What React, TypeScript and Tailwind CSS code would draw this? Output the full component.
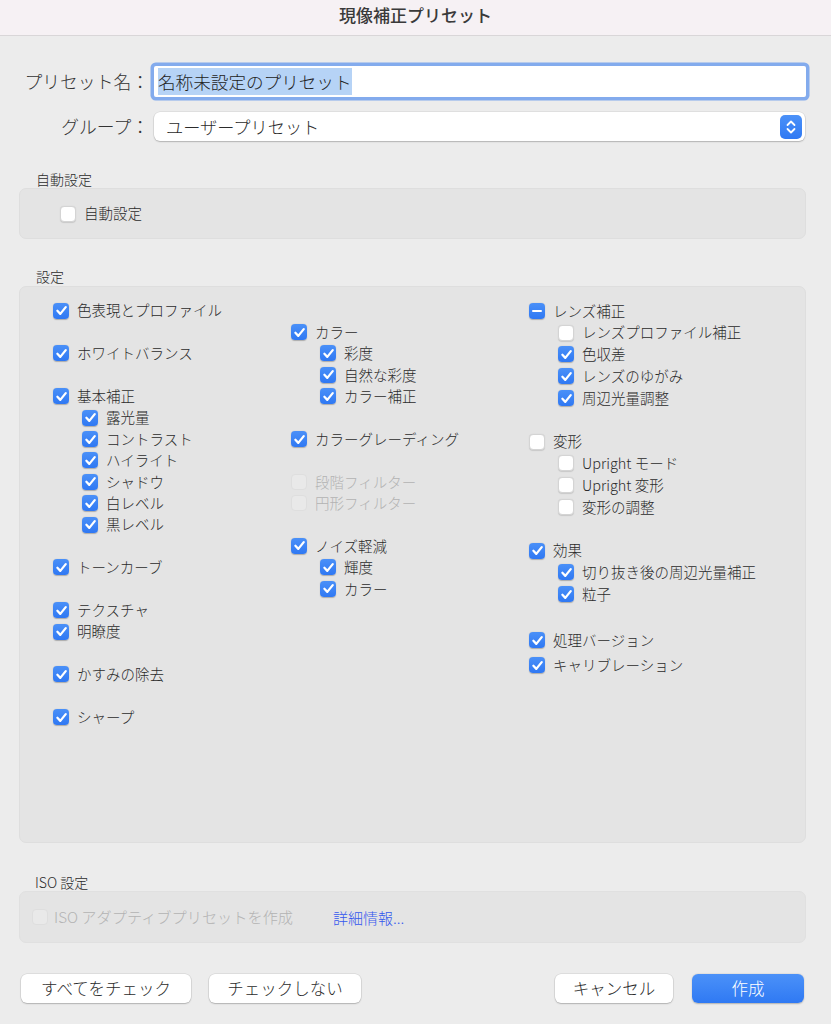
import React from "react";

type State = "on" | "off" | "mixed" | "disabled";

const FONT = { fontFamily: '"Noto Sans CJK JP", "Noto Sans", sans-serif' };

function Box({ state }: { state: State }) {
  if (state === "on") {
    return (
      <span className="flex h-[16px] w-[16px] shrink-0 items-center justify-center rounded-[4px] bg-gradient-to-b from-[#4a90f8] to-[#2f78f3] shadow-[0_0.5px_1px_rgba(0,0,0,0.25)]">
        <svg width="13" height="13" viewBox="0 0 12 12" fill="none">
          <path d="M2.2 6.3 L4.9 9.1 L9.9 2.9" stroke="white" strokeWidth="2.1" strokeLinecap="round" strokeLinejoin="round" />
        </svg>
      </span>
    );
  }
  if (state === "mixed") {
    return (
      <span className="flex h-[16px] w-[16px] shrink-0 items-center justify-center rounded-[4px] bg-gradient-to-b from-[#4a90f8] to-[#2f78f3] shadow-[0_0.5px_1px_rgba(0,0,0,0.25)]">
        <span className="h-[2.5px] w-[10px] rounded-full bg-white" />
      </span>
    );
  }
  if (state === "disabled") {
    return <span className="h-[16px] w-[16px] shrink-0 rounded-[4px] border border-[#dedede] bg-[#e9e9e9]" />;
  }
  return <span className="h-[16px] w-[16px] shrink-0 rounded-[4px] border border-[#d4d4d4] bg-white shadow-[0_0.5px_1px_rgba(0,0,0,0.12)]" />;
}

type Item = { t?: string; s?: State; sub?: boolean; h?: string };

function Row({ item, h }: { item: Item; h: string }) {
  const cls = item.h ?? h;
  if (!item.t) return <div className={cls} />;
  const st = item.s ?? "on";
  return (
    <div className={`flex items-center gap-[8px] ${cls} ${item.sub ? "pl-[29px]" : ""}`}>
      <Box state={st} />
      <span className={`whitespace-nowrap text-[14.5px] font-light leading-none ${st === "disabled" ? "text-[#b3b3b3]" : "text-[#2b2b2b]"}`}>
        {item.t}
      </span>
    </div>
  );
}

const B: Item = {};

const col1: Item[] = [
  { t: "色表現とプロファイル" },
  B,
  { t: "ホワイトバランス" },
  B,
  { t: "基本補正" },
  { t: "露光量", sub: true },
  { t: "コントラスト", sub: true },
  { t: "ハイライト", sub: true },
  { t: "シャドウ", sub: true },
  { t: "白レベル", sub: true },
  { t: "黒レベル", sub: true },
  B,
  { t: "トーンカーブ" },
  B,
  { t: "テクスチャ" },
  { t: "明瞭度" },
  B,
  { t: "かすみの除去" },
  B,
  { t: "シャープ" },
];

const col2: Item[] = [
  B,
  { t: "カラー" },
  { t: "彩度", sub: true },
  { t: "自然な彩度", sub: true },
  { t: "カラー補正", sub: true },
  B,
  { t: "カラーグレーディング" },
  B,
  { t: "段階フィルター", s: "disabled" },
  { t: "円形フィルター", s: "disabled" },
  B,
  { t: "ノイズ軽減" },
  { t: "輝度", sub: true },
  { t: "カラー", sub: true },
];

const col3: Item[] = [
  { t: "レンズ補正", s: "mixed" },
  { t: "レンズプロファイル補正", s: "off", sub: true },
  { t: "色収差", sub: true },
  { t: "レンズのゆがみ", sub: true },
  { t: "周辺光量調整", sub: true },
  B,
  { t: "変形", s: "off" },
  { t: "Upright モード", s: "off", sub: true },
  { t: "Upright 変形", s: "off", sub: true },
  { t: "変形の調整", s: "off", sub: true },
  B,
  { t: "効果" },
  { t: "切り抜き後の周辺光量補正", sub: true },
  { t: "粒子", sub: true },
  { h: "h-[24px]" },
  { t: "処理バージョン" },
  { h: "h-[3.5px]" },
  { t: "キャリブレーション" },
];

function Button({ children, w, primary }: { children: React.ReactNode; w: string; primary?: boolean }) {
  return (
    <div
      className={`flex h-[29px] items-center justify-center rounded-[6px] text-[16.5px] font-light leading-none ${w} ${
        primary
          ? "bg-gradient-to-b from-[#4b91f8] to-[#2f79f3] text-white shadow-[0_0.5px_1.5px_rgba(0,0,0,0.25)]"
          : "bg-white text-[#2b2b2b] shadow-[0_0_0_0.5px_rgba(0,0,0,0.12),0_1px_1.5px_rgba(0,0,0,0.2)]"
      }`}
    >
      {children}
    </div>
  );
}

export default function App() {
  return (
    <div style={FONT} className="flex h-[1024px] w-[831px] flex-col overflow-hidden bg-[#ececec]">
      <div className="flex h-[36px] shrink-0 items-start justify-center border-b border-[#d9d6d8] bg-[#f6f1f4] pt-[5px]">
        <span className="text-[17px] font-medium leading-[20px] text-[#3a3a3a]">現像補正プリセット</span>
      </div>

      <div className="flex flex-col pl-[19px] pr-[25px]">
        <div className="mt-[30px] flex items-center">
          <div className="w-[130px] text-right text-[17.8px] font-light leading-none text-[#333]">プリセット名：</div>
          <div className="ml-[5px] flex h-[31px] flex-1 items-center rounded-[2px] bg-white pl-[4px] shadow-[0_0_0_3.5px_rgba(96,150,238,0.75)]">
            <span className="bg-[#b6d3f6] text-[17.6px] font-light leading-[27px] text-[#222]">名称未設定のプリセット</span>
          </div>
        </div>

        <div className="mt-[15px] flex items-center">
          <div className="w-[130px] text-right text-[17.8px] font-light leading-none text-[#333]">グループ：</div>
          <div className="ml-[5px] mr-[1px] flex h-[29px] flex-1 items-center justify-between rounded-[6px] bg-white pl-[12px] pr-[3px] shadow-[0_0_0_0.5px_rgba(0,0,0,0.1),0_1px_1.5px_rgba(0,0,0,0.2)]">
            <span className="text-[17.2px] font-light leading-none text-[#2b2b2b]">ユーザープリセット</span>
            <span className="flex h-[24px] w-[22px] items-center justify-center rounded-[5px] bg-gradient-to-b from-[#4b91f8] to-[#2f79f3]">
              <svg width="12" height="18" viewBox="0 0 12 18" fill="none">
                <path d="M2.5 7 L6 3.5 L9.5 7" stroke="white" strokeWidth="1.8" strokeLinecap="round" strokeLinejoin="round" />
                <path d="M2.5 11 L6 14.5 L9.5 11" stroke="white" strokeWidth="1.8" strokeLinecap="round" strokeLinejoin="round" />
              </svg>
            </span>
          </div>
        </div>

        <div className="mt-[29px] pl-[17px] text-[14px] font-light leading-[18px] text-[#2b2b2b]">自動設定</div>
        <div className="flex h-[51px] items-center rounded-[7px] border border-[#dedede] bg-[#e4e4e4] pl-[40px]">
          <div className="flex items-center gap-[8px]">
            <Box state="off" />
            <span className="text-[14.5px] font-light leading-none text-[#2b2b2b]">自動設定</span>
          </div>
        </div>

        <div className="mt-[28px] pl-[17px] text-[14px] font-light leading-[18px] text-[#2b2b2b]">設定</div>
        <div className="mt-[1px] flex h-[557px] rounded-[7px] border border-[#dedede] bg-[#e4e4e4] pl-[33px] pt-[13px]">
          <div className="flex w-[238px] flex-col">
            {col1.map((it, i) => (
              <Row key={i} item={it} h="h-[21.4px]" />
            ))}
          </div>
          <div className="flex w-[238px] flex-col">
            {col2.map((it, i) => (
              <Row key={i} item={it} h="h-[21.4px]" />
            ))}
          </div>
          <div className="flex w-[250px] flex-col">
            {col3.map((it, i) => (
              <Row key={i} item={it} h="h-[21.8px]" />
            ))}
          </div>
        </div>

        <div className="mt-[30px] pl-[16px] text-[14px] font-light leading-[18px] text-[#2b2b2b]">ISO 設定</div>
        <div className="flex h-[52px] items-center rounded-[7px] border border-[#e0e0e0] bg-[#e4e4e4] pl-[12px]">
          <div className="flex items-center gap-[6px]">
            <Box state="disabled" />
            <span className="text-[15.2px] font-light leading-none text-[#b3b3b3]">ISO アダプティブプリセットを作成</span>
          </div>
          <span className="ml-[40px] text-[15px] font-light leading-none text-[#3558ee]">詳細情報...</span>
        </div>

        <div className="mt-[31px] flex items-center justify-between px-[2px]">
          <div className="flex gap-[18px]">
            <Button w="w-[170px]">すべてをチェック</Button>
            <Button w="w-[152px]">チェックしない</Button>
          </div>
          <div className="flex gap-[19px]">
            <Button w="w-[118px]">キャンセル</Button>
            <Button w="w-[112px]" primary>
              作成
            </Button>
          </div>
        </div>
      </div>
    </div>
  );
}
